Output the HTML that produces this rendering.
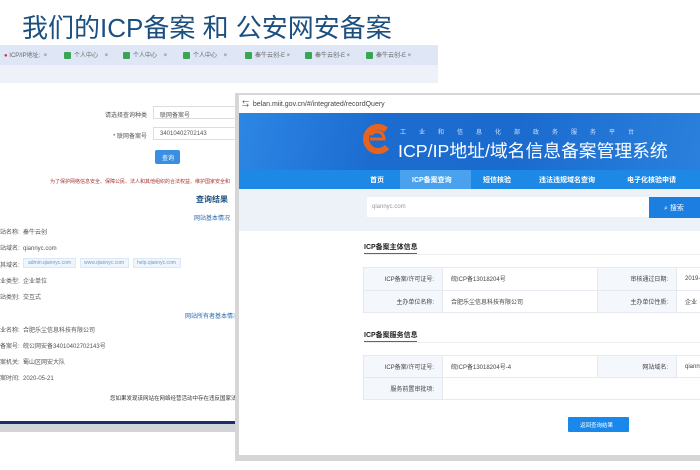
<!DOCTYPE html>
<html><head><meta charset="utf-8"><style>
*{margin:0;padding:0;box-sizing:border-box}
body{width:700px;height:470px;background:#fff;position:relative;overflow:hidden;font-family:"Liberation Sans","Noto Sans CJK SC",sans-serif;color:#333}
.abs{position:absolute}
.title{left:22px;top:8px;font-size:26px;color:#1b4f80;white-space:nowrap}
.tabs{left:0;top:45px;width:438px;height:20px;background:#dfe7f6}
.tab{position:absolute;top:5px;font-size:6px;color:#666;white-space:nowrap}
.tab i{display:inline-block;width:7px;height:7px;background:#3aa655;border-radius:1px;vertical-align:middle;margin-right:3px}
.addr{left:0;top:65px;width:438px;height:18px;background:#eef1f8}
.t{font-size:6px;color:#555;white-space:nowrap;position:absolute}
.win{left:235px;top:93px;width:470px;height:368px;background:#d6d6d6}
.inner{left:239px;top:95px;width:461px;height:360px;background:#fff}
td{border:1px solid #e6eaf0;font-size:6px;padding:0 8px;color:#444;white-space:nowrap;overflow:hidden}
td.l{background:#f4f7fb;text-align:right}
</style></head><body>
<div class="abs title">我们的ICP备案 和 公安网安备案</div>
<div class="abs tabs">
 <div class="tab" style="left:4px"><span style="color:#e24;">●</span> ICP/IP地址: &nbsp;×</div>
 <div class="tab" style="left:64px"><i></i>个人中心 &nbsp;&nbsp;&nbsp;×</div>
 <div class="tab" style="left:123px"><i></i>个人中心 &nbsp;&nbsp;&nbsp;×</div>
 <div class="tab" style="left:183px"><i></i>个人中心 &nbsp;&nbsp;&nbsp;×</div>
 <div class="tab" style="left:245px"><i></i>秦牛云创-E ×</div>
 <div class="tab" style="left:305px"><i></i>秦牛云创-E ×</div>
 <div class="tab" style="left:366px"><i></i>秦牛云创-E ×</div>
</div>
<div class="abs addr"></div>
<div class="t" style="left:105px;top:110px">请选择查询种类</div>
<div class="abs" style="left:153px;top:106px;width:90px;height:13px;border:1px solid #ddd"></div>
<div class="t" style="left:160px;top:110px">联网备案号</div>
<div class="t" style="left:113px;top:131px">* 联网备案号</div>
<div class="abs" style="left:153px;top:127px;width:90px;height:13px;border:1px solid #ddd"></div>
<div class="t" style="left:160px;top:131px">34010402702143</div>
<div class="abs" style="left:155px;top:150px;width:25px;height:14px;background:#3b8fe0;border-radius:2px"></div>
<div class="t" style="left:162px;top:153px;color:#fff">查询</div>
<div class="t" style="left:50px;top:178px;color:#a33;font-size:5px">为了保护网络信息安全、保障公民、法人和其他组织的合法权益、维护国家安全和</div>
<div class="t" style="left:196px;top:194px;font-size:8px;color:#1d4f80;font-weight:bold">查询结果</div>
<div class="t" style="left:194px;top:213px;color:#2a6aaa">网站基本情况</div>
<div class="t" style="left:0;top:227px">站名称: &nbsp;秦牛云创</div>
<div class="t" style="left:0;top:243px">站域名: &nbsp;qiannyc.com</div>
<div class="t" style="left:0;top:260px">其域名:</div>
<div class="abs" style="left:23px;top:258px;width:53px;height:10px;background:#eef5fc;border:1px solid #dbe9f7"></div>
<div class="t" style="left:28px;top:260px;color:#6a9ccc;font-size:5px">admin.qiannyc.com</div>
<div class="abs" style="left:80px;top:258px;width:49px;height:10px;background:#eef5fc;border:1px solid #dbe9f7"></div>
<div class="t" style="left:84px;top:260px;color:#6a9ccc;font-size:5px">www.qiannyc.com</div>
<div class="abs" style="left:133px;top:258px;width:48px;height:10px;background:#eef5fc;border:1px solid #dbe9f7"></div>
<div class="t" style="left:137px;top:260px;color:#6a9ccc;font-size:5px">help.qiannyc.com</div>
<div class="t" style="left:0;top:276px">业类型: &nbsp;企业单位</div>
<div class="t" style="left:0;top:292px">站类别: &nbsp;交互式</div>
<div class="t" style="left:185px;top:311px;color:#2a6aaa">网站所有者基本情况</div>
<div class="t" style="left:0;top:325px">业名称: &nbsp;合肥乐尘信息科技有限公司</div>
<div class="t" style="left:0;top:341px">备案号: &nbsp;皖公网安备34010402702143号</div>
<div class="t" style="left:0;top:357px">案机关: &nbsp;蜀山区网安大队</div>
<div class="t" style="left:0;top:373px">案时间: &nbsp;2020-05-21</div>
<div class="t" style="left:110px;top:394px;font-size:5.5px;color:#333">您如果发现该网站在网络经营活动中存在违反国家法律、</div>
<div class="abs" style="left:0;top:421px;width:240px;height:3px;background:#1d2f6a"></div>
<div class="abs" style="left:0;top:424px;width:240px;height:8px;background:#d2d4d8"></div>

<div class="abs win"></div>
<div class="abs inner"></div>
<div class="t" style="left:242px;top:99px;font-size:7px;color:#444">⇆ &nbsp;belan.miit.gov.cn/#/integrated/recordQuery</div>
<div class="abs" style="left:239px;top:113px;width:461px;height:57px;background:linear-gradient(100deg,#2d86e4 0%,#1c6cd0 30%,#1b6bcf 60%,#2a80dc 100%)"></div>
<svg class="abs" style="left:361px;top:121px" width="32" height="36" viewBox="0 0 32 36"><path d="M25 9A12 12 0 1 0 26 26" fill="none" stroke="#e8641e" stroke-width="6"/><path d="M9 18h14a7 7 0 0 0-13-4" fill="none" stroke="#e8641e" stroke-width="3"/></svg>
<div class="t" style="left:400px;top:127px;font-size:6px;color:#cfe2fa;letter-spacing:13px">工业和信息化部政务服务平台</div>
<div class="t" style="left:398px;top:137px;font-size:17.8px;color:#fff">ICP/IP地址/域名信息备案管理系统</div>
<div class="abs" style="left:239px;top:170px;width:461px;height:19px;background:#1e88e6"></div>
<div class="abs" style="left:400px;top:170px;width:71px;height:19px;background:#4aa2ee"></div>
<div class="t" style="left:370px;top:175px;font-size:7px;color:#fff;font-weight:bold">首页</div>
<div class="t" style="left:412px;top:175px;font-size:7px;color:#fff;font-weight:bold">ICP备案查询</div>
<div class="t" style="left:483px;top:175px;font-size:7px;color:#fff;font-weight:bold">短信核验</div>
<div class="t" style="left:539px;top:175px;font-size:7px;color:#fff;font-weight:bold">违法违规域名查询</div>
<div class="t" style="left:627px;top:175px;font-size:7px;color:#fff;font-weight:bold">电子化核验申请</div>
<div class="abs" style="left:239px;top:189px;width:461px;height:42px;background:#edf2f9"></div>
<div class="abs" style="left:367px;top:197px;width:282px;height:20px;background:#fff"></div>
<div class="t" style="left:372px;top:204px;color:#999">qiannyc.com</div>
<div class="abs" style="left:649px;top:197px;width:51px;height:21px;background:#1b7fe2"></div>
<div class="t" style="left:664px;top:203px;color:#fff;font-size:7px">⌕ 搜索</div>
<div class="t" style="left:364px;top:242px;font-size:7px;color:#222;font-weight:bold">ICP备案主体信息</div>
<div class="abs" style="left:364px;top:253px;width:53px;height:1px;background:#2c7a7a"></div>
<div class="abs" style="left:364px;top:254px;width:336px;height:1px;background:#eee"></div>
<table class="abs" style="left:363px;top:267px;width:350px;border-collapse:collapse;height:46px;table-layout:fixed">
<tr><td class="l" style="width:79px">ICP备案/许可证号:</td><td style="width:155px">皖ICP备13018204号</td><td class="l" style="width:79px">审核通过日期:</td><td>2019-0</td></tr>
<tr><td class="l">主办单位名称:</td><td>合肥乐尘信息科技有限公司</td><td class="l">主办单位性质:</td><td>企业</td></tr>
</table>
<div class="t" style="left:364px;top:330px;font-size:7px;color:#222;font-weight:bold">ICP备案服务信息</div>
<div class="abs" style="left:364px;top:341px;width:53px;height:1px;background:#2c7a7a"></div>
<div class="abs" style="left:364px;top:342px;width:336px;height:1px;background:#eee"></div>
<table class="abs" style="left:363px;top:355px;width:350px;border-collapse:collapse;height:45px;table-layout:fixed">
<tr><td class="l" style="width:79px">ICP备案/许可证号:</td><td style="width:155px">皖ICP备13018204号-4</td><td class="l" style="width:79px">网站域名:</td><td>qianny</td></tr>
<tr><td class="l">服务前置审批项:</td><td colspan="3"></td></tr>
</table>
<div class="abs" style="left:568px;top:417px;width:61px;height:15px;background:#1a88ea;border-radius:1px"></div>
<div class="t" style="left:580px;top:421px;color:#fff;font-size:5.5px">返回查询结果</div>
</body></html>
